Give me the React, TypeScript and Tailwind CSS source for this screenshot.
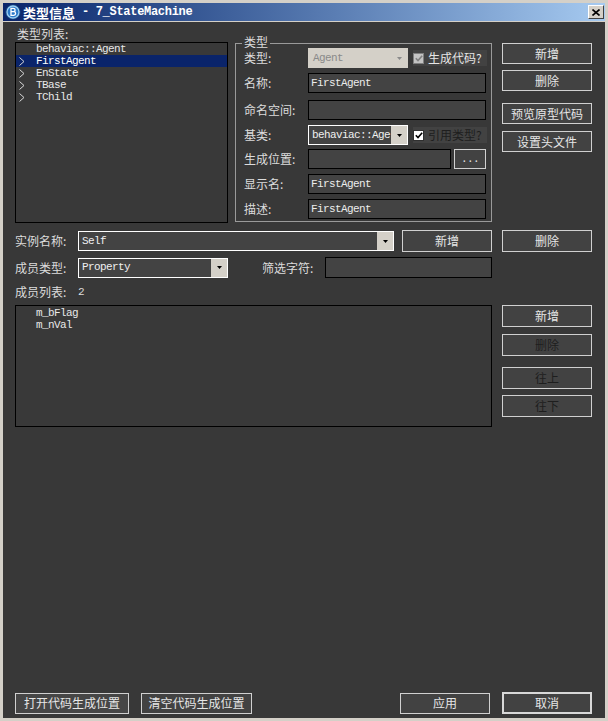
import React from "react";

const CJK = "font-['Noto_Sans_CJK_SC','Noto_Sans',sans-serif]";
const MONO = "font-['Liberation_Mono','Noto_Sans_CJK_SC',monospace] text-[11px] tracking-[-0.6px]";

function Btn({
  className = "",
  children,
  disabled = false,
  def = false,
}: {
  className?: string;
  children: React.ReactNode;
  disabled?: boolean;
  def?: boolean;
}) {
  return (
    <button
      type="button"
      className={`flex items-center justify-center bg-[#424242] ${
        def ? "border-2 border-[#d8d8d8]" : "border border-[#d0d0d0]"
      } ${disabled ? "text-[#1e1e1e]" : "text-[#e6e6e6]"} text-[12px] leading-none ${CJK} ${className}`}
    >
      {children}
    </button>
  );
}

function Arrow({ color = "#000" }: { color?: string }) {
  return (
    <svg width="5" height="3" viewBox="0 0 5 3">
      <polygon points="0,0 5,0 2.5,3" fill={color} />
    </svg>
  );
}

function TextBox({ className = "", text = "" }: { className?: string; text?: string }) {
  return (
    <div
      className={`border border-black bg-[#434343] pl-[2px] pt-[2px] text-[#ececec] leading-[14px] ${MONO} ${className}`}
    >
      {text}
    </div>
  );
}

function Combo({ className = "", text }: { className?: string; text: string }) {
  return (
    <div className={`flex border border-white bg-[#434343] ${className}`}>
      <div className={`flex flex-1 items-center pl-[3px] text-[#f0f0f0] ${MONO}`}>{text}</div>
      <div className="flex w-[16px] items-center justify-center bg-[#d4d0c8]">
        <Arrow />
      </div>
    </div>
  );
}

function Check({ disabled }: { disabled?: boolean }) {
  return (
    <div
      className={`flex h-[11px] w-[11px] items-center justify-center border ${
        disabled ? "border-[#808080] bg-[#c4c4c4]" : "border-[#303030] bg-white"
      }`}
    >
      <svg width="8" height="7" viewBox="0 0 8 7">
        <polyline
          points="0.8,3.2 3,5.5 7.2,0.8"
          fill="none"
          stroke={disabled ? "#808080" : "#000"}
          strokeWidth="1.6"
        />
      </svg>
    </div>
  );
}

function Chevron() {
  return (
    <svg width="6" height="9" viewBox="0 0 6 9">
      <polyline points="0.5,0.5 5,4.5 0.5,8.5" fill="none" stroke="#d8d8d8" strokeWidth="1" />
    </svg>
  );
}

function GroupRow({ label, children, className = "" }: { label: string; children: React.ReactNode; className?: string }) {
  return (
    <div className={`flex h-[20px] items-center ${className}`}>
      <div className={`w-[64px] text-[12px] leading-[14px] text-[#dcdcdc] ${CJK}`}>{label}</div>
      {children}
    </div>
  );
}

export default function App() {
  const types = [
    { name: "behaviac::Agent", chev: false, sel: false },
    { name: "FirstAgent", chev: true, sel: true },
    { name: "EnState", chev: true, sel: false },
    { name: "TBase", chev: true, sel: false },
    { name: "TChild", chev: true, sel: false },
  ];

  return (
    <div className="flex h-[721px] w-[608px] flex-col bg-[#d4d0c8] px-[3px] pt-[3px]">
      {/* Title bar */}
      <div className="flex h-[18px] items-center bg-gradient-to-r from-[#0a246a] to-[#a6caf0] pl-[2px] pr-[1px]">
        <svg width="16" height="16" viewBox="0 0 16 16">
          <circle cx="8" cy="8" r="7.6" fill="#174a86" />
          <circle cx="8" cy="8" r="6" fill="#2a78c8" stroke="#9ed0f5" strokeWidth="1.3" />
          <path
            d="M6 4.3h2.4a1.7 1.7 0 0 1 0 3.4H6zM6 7.7h2.8a1.8 1.8 0 0 1 0 3.6H6z"
            fill="none"
            stroke="#ffffff"
            strokeWidth="1.3"
          />
        </svg>
        <div className="ml-[2px] flex items-center text-white">
          <span className={`text-[13px] font-bold leading-none ${CJK}`}>类型信息</span>
          <span className="font-['Liberation_Mono',monospace] text-[12px] font-bold leading-none tracking-[-0.3px] whitespace-pre">
            {" - 7_StateMachine"}
          </span>
        </div>
        <div className="ml-auto flex h-[14px] w-[16px] items-center justify-center border border-t-white border-l-white border-r-[#404040] border-b-[#404040] bg-[#d4d0c8]">
          <svg width="8" height="7" viewBox="0 0 8 7">
            <path d="M0.5 0.5L7.5 6.5M7.5 0.5L0.5 6.5" stroke="#000" strokeWidth="1.6" />
          </svg>
        </div>
      </div>

      {/* Body */}
      <div className="mt-[1px] flex h-[696px] flex-col bg-[#383838] pl-[12px]">
        {/* Top section */}
        <div className="mt-[5px] flex items-start">
          <div className="flex w-[213px] flex-col">
            <div className={`h-[15px] pl-[2px] text-[12px] leading-[14px] text-[#dcdcdc] ${CJK}`}>类型列表:</div>
            <div className="h-[181px] border border-black bg-[#393939]">
              {types.map((t) => (
                <div
                  key={t.name}
                  className={`flex h-[12px] items-center ${t.sel ? "bg-[#0a246a] text-white" : "text-[#e8e8e8]"}`}
                >
                  <div className="flex w-[20px] items-center pl-[3px]">{t.chev ? <Chevron /> : null}</div>
                  <span className={`leading-[12px] ${MONO}`}>{t.name}</span>
                </div>
              ))}
            </div>
          </div>

          {/* Group box */}
          <div className="relative ml-[7px] mt-[16px] h-[179px] w-[257px] border border-[#9a9a9a] pl-[8px]">
            <div
              className={`absolute left-[6px] top-[-9px] bg-[#383838] px-[2px] text-[12px] leading-[14px] text-[#dcdcdc] ${CJK}`}
            >
              类型
            </div>
            <GroupRow label="类型:" className="mt-[4px]">
              <div className="flex h-[20px] w-[100px] bg-[#d4d0c8] py-[3px] pl-[3px]">
                <div className={`flex flex-1 items-center pl-[2px] text-[#8a8a8a] ${MONO}`}>Agent</div>
                <div className="flex w-[18px] items-center justify-center">
                  <Arrow color="#8a8a8a" />
                </div>
              </div>
              <div className="ml-[5px] flex h-[16px] w-[74px] items-center bg-[#424242]">
                <Check disabled />
                <span className={`ml-[4px] text-[12px] leading-none text-[#e6e6e6] ${CJK}`}>生成代码?</span>
              </div>
            </GroupRow>
            <GroupRow label="名称:" className="mt-[5px]">
              <TextBox className="h-[20px] w-[178px]" text="FirstAgent" />
            </GroupRow>
            <GroupRow label="命名空间:" className="mt-[7px]">
              <TextBox className="h-[20px] w-[178px]" />
            </GroupRow>
            <GroupRow label="基类:" className="mt-[5px]">
              <Combo className="h-[20px] w-[100px]" text="behaviac::Age" />
              <div className="ml-[5px] flex h-[16px] w-[74px] items-center bg-[#424242]">
                <Check />
                <span className={`ml-[4px] text-[12px] leading-none text-[#1e1e1e] ${CJK}`}>引用类型?</span>
              </div>
            </GroupRow>
            <GroupRow label="生成位置:" className="mt-[4px]">
              <TextBox className="h-[20px] w-[143px]" />
              <button
                type="button"
                className={`ml-[3px] flex h-[20px] w-[32px] items-center justify-center border border-[#d0d0d0] bg-[#424242] text-[#e6e6e6] ${MONO}`}
              >
                ...
              </button>
            </GroupRow>
            <GroupRow label="显示名:" className="mt-[5px]">
              <TextBox className="h-[20px] w-[178px]" text="FirstAgent" />
            </GroupRow>
            <GroupRow label="描述:" className="mt-[5px]">
              <TextBox className="h-[20px] w-[178px]" text="FirstAgent" />
            </GroupRow>
          </div>

          {/* Right buttons */}
          <div className="ml-[10px] mt-[16px] flex w-[90px] flex-col">
            <Btn className="h-[21px] w-[90px]">新增</Btn>
            <Btn className="mt-[6px] h-[21px] w-[90px]">删除</Btn>
            <Btn className="mt-[12px] h-[21px] w-[90px]">预览原型代码</Btn>
            <Btn className="mt-[7px] h-[21px] w-[90px]">设置头文件</Btn>
          </div>
        </div>

        {/* Instance row */}
        <div className="mt-[7px] flex h-[22px] items-center">
          <div className={`w-[63px] text-[12px] leading-[14px] text-[#dcdcdc] ${CJK}`}>实例名称:</div>
          <Combo className="h-[20px] w-[316px]" text="Self" />
          <Btn className="ml-[8px] h-[22px] w-[90px]">新增</Btn>
          <Btn className="ml-[10px] h-[22px] w-[90px]">删除</Btn>
        </div>

        {/* Member type row */}
        <div className="mt-[5px] flex h-[21px] items-center">
          <div className={`w-[63px] text-[12px] leading-[14px] text-[#dcdcdc] ${CJK}`}>成员类型:</div>
          <Combo className="h-[20px] w-[150px]" text="Property" />
          <div className={`ml-[34px] w-[63px] text-[12px] leading-[14px] text-[#dcdcdc] ${CJK}`}>筛选字符:</div>
          <TextBox className="h-[21px] w-[167px]" />
        </div>

        {/* Member count */}
        <div className="mt-[7px] flex h-[14px] items-center">
          <div className={`w-[63px] text-[12px] leading-[14px] text-[#dcdcdc] ${CJK}`}>成员列表:</div>
          <span className={`text-[#dcdcdc] ${MONO}`}>2</span>
        </div>

        {/* Member list */}
        <div className="mt-[6px] flex items-start">
          <div className="h-[122px] w-[477px] border border-black bg-[#393939] pt-[1px]">
            {["m_bFlag", "m_nVal"].map((m) => (
              <div key={m} className={`flex h-[12px] items-center pl-[20px] leading-[12px] text-[#e8e8e8] ${MONO}`}>
                {m}
              </div>
            ))}
          </div>
          <div className="ml-[10px] flex w-[90px] flex-col">
            <Btn className="h-[22px] w-[90px]">新增</Btn>
            <Btn disabled className="mt-[7px] h-[22px] w-[90px]">删除</Btn>
            <Btn disabled className="mt-[11px] h-[22px] w-[90px]">往上</Btn>
            <Btn disabled className="mt-[6px] h-[22px] w-[90px]">往下</Btn>
          </div>
        </div>

        <div className="flex-1" />

        {/* Bottom buttons */}
        <div className="mb-[4px] flex h-[22px] items-center">
          <Btn className="h-[21px] w-[114px] bg-[#464646]">打开代码生成位置</Btn>
          <Btn className="ml-[12px] h-[21px] w-[111px]">清空代码生成位置</Btn>
          <Btn className="ml-[148px] h-[21px] w-[90px]">应用</Btn>
          <Btn def className="ml-[12px] h-[22px] w-[90px]">取消</Btn>
        </div>
      </div>
    </div>
  );
}
